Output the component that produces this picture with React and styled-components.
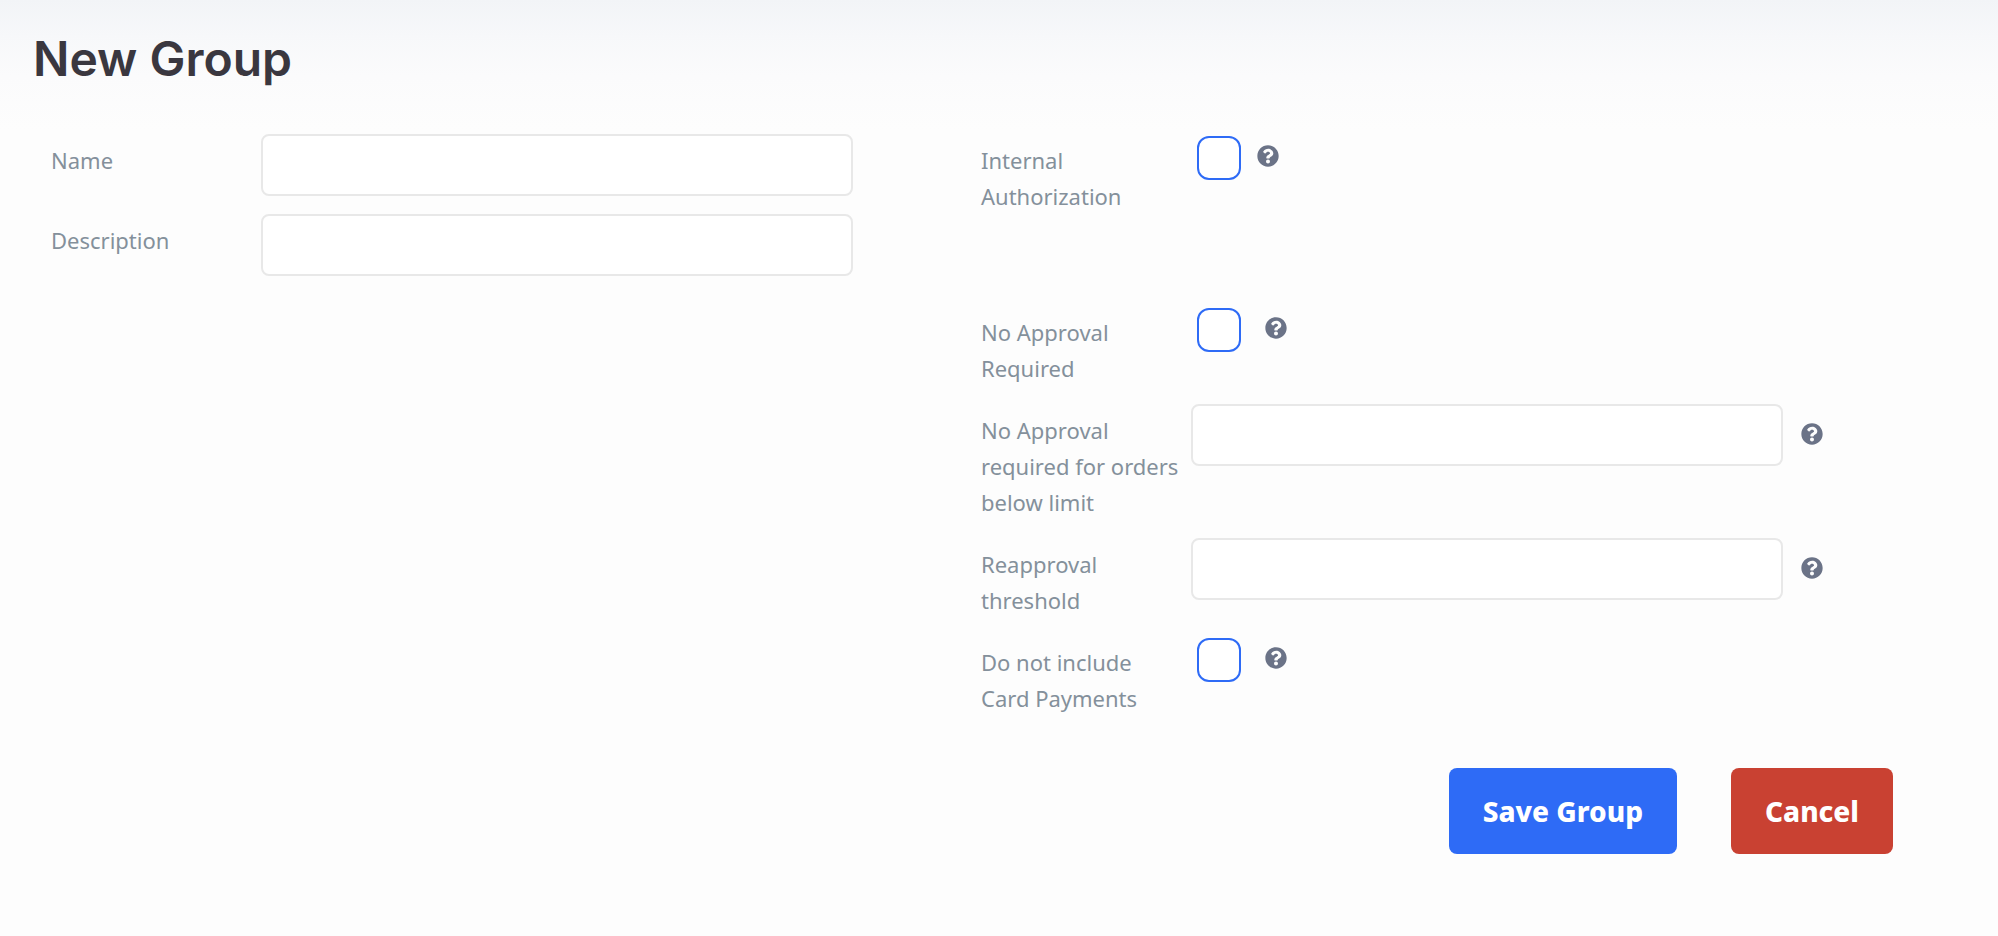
import { useState } from 'react';
import styled, { createGlobalStyle } from 'styled-components';
import { FaQuestionCircle } from 'react-icons/fa';

const GlobalStyle = createGlobalStyle`
  * {
    box-sizing: border-box;
  }

  body {
    margin: 0;
    background-color: #fdfdfd;
    font-family: Tahoma, 'Noto Sans', sans-serif;
  }
`;

const Page = styled.main`
  min-height: 100vh;
  padding: 28px 105px 80px 33px;
  background: linear-gradient(#f2f4f7 0, #f7f8fa 36px, #fbfbfc 76px, #fdfdfd 130px);
`;

const Title = styled.h1`
  margin: 0 0 44px;
  font-family: Inter, sans-serif;
  font-size: 48px;
  font-weight: 600;
  line-height: 62px;
  color: #3a373f;
`;

const Columns = styled.div`
  display: grid;
  grid-template-columns: 1fr 1fr;
  column-gap: 88px;
  padding: 0 70px 0 18px;
`;

const Column = styled.div`
  display: flex;
  flex-direction: column;
`;

const Row = styled.div`
  display: grid;
  grid-template-columns: 210px 1fr 40px;
  align-items: start;
  margin-bottom: ${({ $spaced }) => ($spaced ? '90px' : '16px')};
`;

const Label = styled.label`
  padding: 8px 8px 2px 0;
  font-size: 22px;
  line-height: 36px;
  color: #84909b;
`;

const TextInput = styled.input`
  width: 100%;
  height: 62px;
  margin-bottom: 2px;
  padding: 0 16px;
  border: 2px solid #e8e8e8;
  border-radius: 8px;
  background-color: #fff;
  font: inherit;
  font-size: 22px;
  color: #3a373f;
`;

const CheckArea = styled.div`
  display: flex;
  align-items: flex-start;
  gap: ${({ $wide }) => ($wide ? '24px' : '16px')};
  padding: 2px 0 0 6px;
`;

const Checkbox = styled.input`
  appearance: none;
  width: 44px;
  height: 44px;
  margin: 0;
  border: 2px solid #2e6bf6;
  border-radius: 12px;
  background-color: #fff;
  cursor: pointer;

  &:checked {
    background-color: #2e6bf6;
    box-shadow: inset 0 0 0 8px #fff;
  }
`;

const HelpIcon = styled(FaQuestionCircle)`
  width: 22px;
  height: 22px;
  margin: ${({ $beside }) => ($beside === 'input' ? '19px 0 0 18px' : '9px 0 0')};
  color: #6b7387;
`;

const Actions = styled.div`
  display: flex;
  justify-content: flex-end;
  gap: 54px;
  margin-top: 34px;
`;

const Button = styled.button`
  height: 86px;
  padding: 0 34px;
  border: none;
  border-radius: 8px;
  background-color: ${({ $danger }) => ($danger ? '#c94132' : '#2e6bf6')};
  color: #fff;
  font-family: inherit;
  font-size: 28px;
  font-weight: 800;
  cursor: pointer;
`;

function TextField({ id, label, help }) {
  return (
    <Row>
      <Label htmlFor={id}>{label}</Label>
      <TextInput id={id} name={id} type="text" />
      {help && <HelpIcon $beside="input" aria-hidden="true" />}
    </Row>
  );
}

function CheckField({ id, label, wide, spaced }) {
  const [checked, setChecked] = useState(false);

  return (
    <Row $spaced={spaced}>
      <Label htmlFor={id}>{label}</Label>
      <CheckArea $wide={wide}>
        <Checkbox
          id={id}
          name={id}
          type="checkbox"
          checked={checked}
          onChange={(e) => setChecked(e.target.checked)}
        />
        <HelpIcon $beside="checkbox" aria-hidden="true" />
      </CheckArea>
    </Row>
  );
}

function App() {
  return (
    <>
      <GlobalStyle />
      <Page>
        <Title>New Group</Title>
        <form onSubmit={(e) => e.preventDefault()}>
          <Columns>
            <Column>
              <TextField id="name" label="Name" />
              <TextField id="description" label="Description" />
            </Column>
            <Column>
              <CheckField id="internalAuth" label="Internal Authorization" spaced />
              <CheckField id="noApproval" label="No Approval Required" wide />
              <TextField id="approvalLimit" label="No Approval required for orders below limit" help />
              <TextField id="threshold" label="Reapproval threshold" help />
              <CheckField id="noCards" label="Do not include Card Payments" wide />
            </Column>
          </Columns>
          <Actions>
            <Button type="submit">Save Group</Button>
            <Button type="button" $danger>Cancel</Button>
          </Actions>
        </form>
      </Page>
    </>
  );
}

export default App;
